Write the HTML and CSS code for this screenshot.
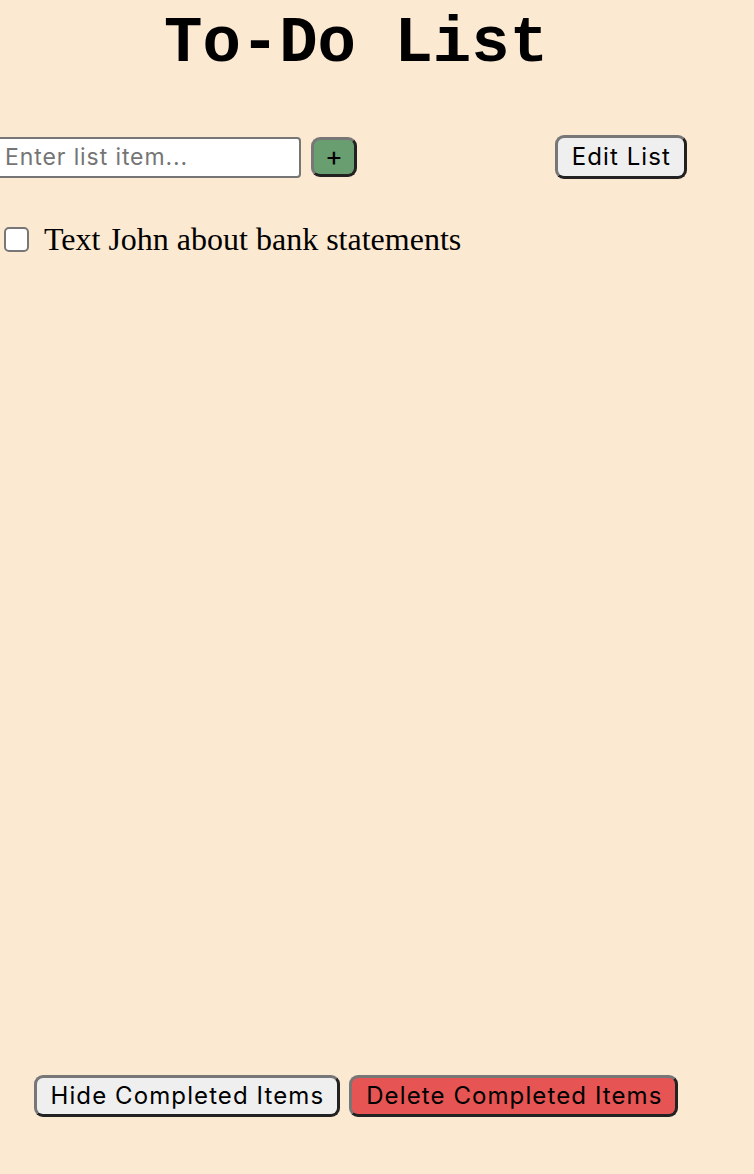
FILE: index.html
```html
<!DOCTYPE html>
<html lang="en">
<head>
<meta charset="utf-8">
<title>To-Do List</title>
<link rel="stylesheet" href="styles.css">
</head>
<body>
<div class="app">
  <h1 class="title">To-Do List</h1>
  <div class="entry-row">
    <div class="entry">
      <input class="entry-input" type="text" placeholder="Enter list item...">
      <button class="btn btn-add" type="button">+</button>
    </div>
    <button class="btn btn-edit" type="button">Edit List</button>
  </div>
  <ul class="list">
    <li class="item">
      <input class="check" type="checkbox">
      <span class="item-text">Text John about bank statements</span>
    </li>
  </ul>
  <div class="footer">
    <button class="btn btn-hide" type="button">Hide Completed Items</button>
    <button class="btn btn-delete" type="button">Delete Completed Items</button>
  </div>
</div>
</body>
</html>
```
FILE: styles.css
```css
html, body {
  margin: 0;
  padding: 0;
  background: #fce9d1;
  overflow: hidden;
}

.app {
  width: 712px;
  min-height: 100vh;
  display: flex;
  flex-direction: column;
  box-sizing: border-box;
}

.title {
  margin: 8px 0 0;
  text-align: center;
  font-family: "Courier New", "Liberation Mono", monospace;
  font-weight: bold;
  font-size: 64px;
  line-height: normal;
  color: #000;
}

.entry-row {
  margin-top: 55px;
  display: flex;
  align-items: center;
  justify-content: space-between;
  padding-right: 25px;
}

.entry {
  display: flex;
  align-items: center;
  gap: 10px;
  margin-left: -12px;
}

.entry-input {
  width: 313px;
  height: 41px;
  box-sizing: border-box;
  border: 2px solid #767676;
  border-radius: 4px;
  padding: 2px 4px 2px 15px;
  background: #fff;
  font-family: "Inter", "Liberation Sans", sans-serif;
  font-size: 23px;
  letter-spacing: 0.9px;
  color: #000;
}

.entry-input::placeholder {
  color: #757575;
}

.btn {
  font-family: "Inter", "Liberation Sans", sans-serif;
  font-size: 24px;
  letter-spacing: 1.1px;
  color: #000;
  background: #efefef;
  border: 3px solid;
  border-color: #777 #222 #222 #777;
  border-radius: 9px;
  padding: 4px 13px 4px 14px;
  line-height: 28px;
  cursor: pointer;
  white-space: nowrap;
}

.btn-add {
  width: 46px;
  height: 40px;
  padding: 0;
  background: #699e70;
  font-size: 27px;
  letter-spacing: 0;
  line-height: 30px;
}

.btn-edit {
  height: 44px;
  padding: 0 13px 0 14px;
}

.list {
  list-style: none;
  margin: 42px 0 0;
  padding: 0;
  flex: 1;
}

.item {
  display: flex;
  align-items: center;
  gap: 15px;
  padding-left: 4px;
}

.check {
  appearance: none;
  -webkit-appearance: none;
  width: 25px;
  height: 25px;
  margin: 0;
  box-sizing: border-box;
  border: 2px solid #777;
  border-radius: 5px;
  background: #fff;
}

.item-text {
  font-family: "Liberation Serif", "Times New Roman", serif;
  font-size: 32px;
  line-height: 36px;
  color: #000;
}

.footer {
  display: flex;
  justify-content: center;
  gap: 9px;
  margin-bottom: 57px;
}

.btn-hide {
  height: 42px;
}

.btn-delete {
  height: 42px;
  background: #e65453;
}
```
